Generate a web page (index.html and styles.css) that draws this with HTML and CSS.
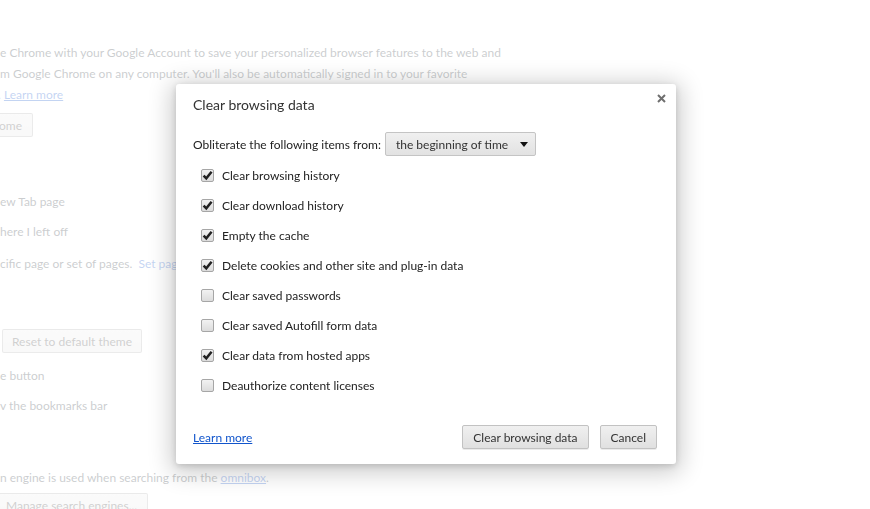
FILE: index.html
```html
<!DOCTYPE html>
<html lang="en">

<head>
    <meta charset="UTF-8">
    <meta name="viewport" content="width=device-width, initial-scale=1.0">
    <title>Settings - Clear browsing data</title>
    <link rel="stylesheet" href="styles.css">
</head>

<body>

    <!-- settings page underneath the overlay -->
    <div id="settings">
        <div class="line first">e Chrome with your Google Account to save your personalized browser features to the web and</div>
        <div class="line">m Google Chrome on any computer. You'll also be automatically signed in to your favorite</div>
        <div class="line learn">. <a href="#">Learn more</a></div>
        <div class="row-btn"><button class="page-btn sign-in">Sign in to Chrome</button></div>

        <div class="line startup">ew Tab page</div>
        <div class="line gap8">here I left off</div>
        <div class="line gap10">cific page or set of pages. &nbsp;<a href="#" class="plain">Set pages</a></div>

        <div class="row-btn theme"><button class="page-btn reset">Reset to default theme</button></div>
        <div class="line gap12">e button</div>
        <div class="line gap8">v the bookmarks bar</div>

        <div class="line search">n engine is used when searching from the <a href="#">omnibox</a>.</div>
        <div class="row-btn engines"><button class="page-btn manage">Manage search engines...</button></div>
    </div>

    <div id="overlay"></div>

    <div id="clearDialog" class="dialog">
        <div class="dialog-head">
            <h1>Clear browsing data</h1>
            <span class="close" title="Close">
                <svg width="9" height="9" viewBox="0 0 9 9">
                    <path d="M1 1 L8 8 M8 1 L1 8" stroke="#6f6f6f" stroke-width="2" />
                </svg>
            </span>
        </div>

        <div class="time-row">
            <label for="timePeriod">Obliterate the following items from:</label>
            <div id="timePeriod" class="select">
                <span>the beginning of time</span>
                <svg class="arrow" width="8" height="5" viewBox="0 0 8 5">
                    <path d="M0 0 H8 L4 5 Z" fill="#111" />
                </svg>
            </div>
        </div>

        <div id="items" class="items"></div>

        <div class="dialog-foot">
            <a href="#" class="link">Learn more</a>
            <div class="buttons">
                <button class="btn">Clear browsing data</button>
                <button class="btn">Cancel</button>
            </div>
        </div>
    </div>

    <script>
        const items = [
            ['Clear browsing history', true],
            ['Clear download history', true],
            ['Empty the cache', true],
            ['Delete cookies and other site and plug-in data', true],
            ['Clear saved passwords', false],
            ['Clear saved Autofill form data', false],
            ['Clear data from hosted apps', true],
            ['Deauthorize content licenses', false]
        ];

        const check = '<svg width="11" height="11" viewBox="0 0 11 11"><path d="M1.6 5.6 L4.3 8.4 L9.6 1.8" fill="none" stroke="#222" stroke-width="2.5" /></svg>';

        let list = document.getElementById('items');
        items.forEach(item => {
            let row = document.createElement('label');
            row.className = 'item';
            let box = document.createElement('span');
            box.className = 'checkbox';
            if (item[1]) {
                box.innerHTML = check;
            }
            let text = document.createElement('span');
            text.textContent = item[0];
            row.appendChild(box);
            row.appendChild(text);
            list.appendChild(row);
        });
    </script>
</body>

</html>
```
FILE: styles.css
```css
* {
    padding: 0;
    margin: 0;
    box-sizing: border-box;
}

body {
    font-family: Lato, "Open Sans", sans-serif;
    background-color: #fff;
    overflow: hidden;
    height: 509px;
}

/* settings page */

#settings {
    font-size: 12px;
    color: #303942;
    padding-top: 42px;
    display: flex;
    flex-direction: column;
}

#settings a {
    color: #15c;
    text-decoration: underline;
}

#settings a.plain {
    text-decoration: none;
}

.line {
    height: 21px;
    line-height: 21px;
    white-space: nowrap;
}

.learn {
    margin-left: -2px;
}

.row-btn {
    height: 24px;
    margin-top: 8px;
    white-space: nowrap;
}

.page-btn {
    font-family: inherit;
    font-size: 12px;
    color: #444;
    height: 24px;
    padding: 0 10px;
    white-space: nowrap;
    border: 1px solid rgba(0, 0, 0, 0.25);
    border-radius: 2px;
    background: linear-gradient(#ededed, #e5e5e5);
}

.sign-in {
    margin-left: -83px;
}

.startup {
    margin-top: 54px;
}

.gap8 {
    margin-top: 9px;
}

.gap10 {
    margin-top: 11px;
}

.theme {
    margin-top: 55px;
}

.reset {
    margin-left: 2px;
    width: 140px;
    padding: 0;
}

.gap12 {
    margin-top: 12px;
}

.search {
    margin-top: 51px;
}

.engines {
    margin-top: 5px;
}

.manage {
    margin-left: -5px;
}

#overlay {
    position: fixed;
    inset: 0;
    background: rgba(255, 255, 255, 0.75);
}

/* dialog */

.dialog {
    position: fixed;
    left: 176px;
    top: 84px;
    width: 500px;
    height: 380px;
    background: #fff;
    border-radius: 3px;
    box-shadow: 0 4px 23px 5px rgba(0, 0, 0, 0.2), 0 2px 6px rgba(0, 0, 0, 0.15);
    padding: 11px 19px 15px 17px;
    display: flex;
    flex-direction: column;
    font-size: 12px;
    color: #222;
}

.dialog-head {
    display: flex;
    justify-content: space-between;
    align-items: flex-start;
    height: 20px;
}

.dialog-head h1 {
    font-size: 14px;
    font-weight: normal;
    line-height: 20px;
    color: #333;
}

.close {
    margin-top: -1px;
    margin-right: -9px;
    display: flex;
}

.time-row {
    display: flex;
    align-items: center;
    margin-top: 17px;
    height: 24px;
}

.time-row label {
    margin-right: 4px;
}

.select {
    display: flex;
    align-items: center;
    justify-content: space-between;
    width: 151px;
    height: 24px;
    padding: 0 7px 0 10px;
    border: 1px solid #c4c4c4;
    border-radius: 2px;
    background: linear-gradient(#f0f0f0, #e2e2e2);
    color: #333;
}

.items {
    margin-top: 4px;
    display: flex;
    flex-direction: column;
}

.item {
    display: flex;
    align-items: center;
    height: 30px;
    padding-left: 8px;
}

.checkbox {
    width: 13px;
    height: 13px;
    margin-right: 8px;
    border: 1px solid #a6a6a6;
    border-radius: 2px;
    background: linear-gradient(#f2f2f2, #dcdcdc);
    display: flex;
    align-items: center;
    justify-content: center;
}

.dialog-foot {
    margin-top: auto;
    display: flex;
    align-items: center;
    justify-content: space-between;
}

.link {
    color: #15c;
    text-decoration: underline;
}

.buttons {
    display: flex;
    gap: 11px;
}

.btn {
    font-family: inherit;
    font-size: 12px;
    color: #333;
    height: 24px;
    padding: 0 10px;
    border: 1px solid #c2c2c2;
    border-radius: 2px;
    background: linear-gradient(#f0f0f0, #e0e0e0);
    box-shadow: 0 1px 0 rgba(0, 0, 0, 0.08);
}
```
